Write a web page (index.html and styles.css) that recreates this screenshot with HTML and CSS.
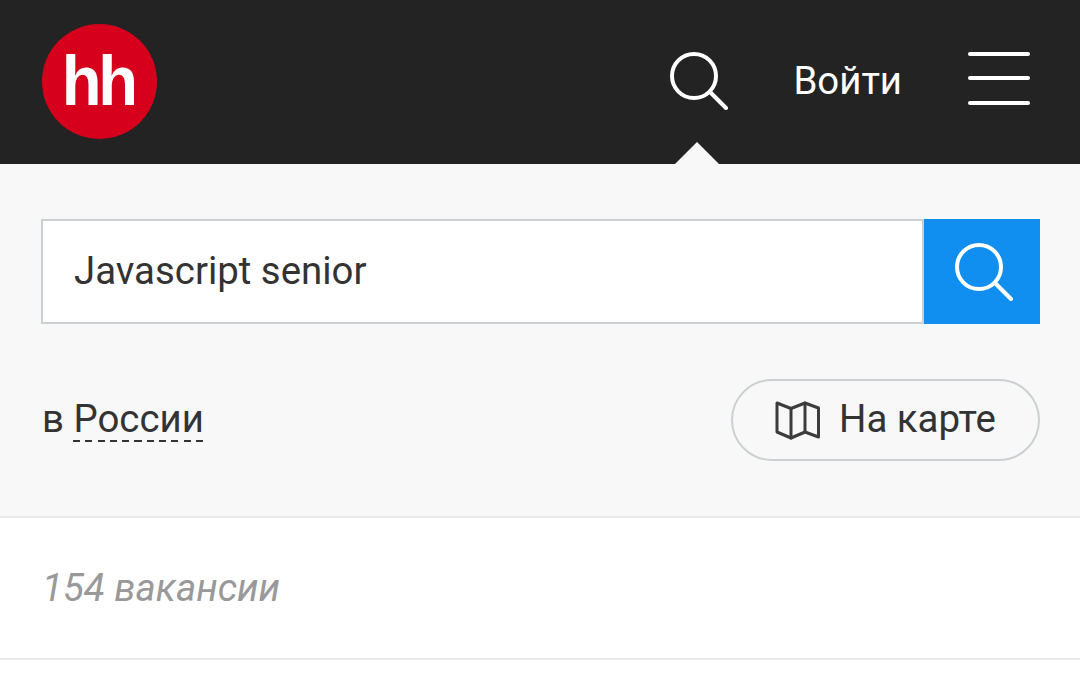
FILE: index.html
```html
<!DOCTYPE html>
<html lang="ru">
<head>
<meta charset="utf-8">
<title>hh</title>
<link rel="stylesheet" href="styles.css">
</head>
<body>
<header class="header">
  <a class="logo"><span class="logo-text">hh</span></a>
  <div class="header-actions">
    <a class="header-search">
      <svg width="58" height="58" viewBox="0 0 58 58" fill="none" stroke="#fff" stroke-width="4" stroke-linecap="round"><circle cx="24" cy="24" r="22"/><path d="M40 40 L56 56"/></svg>
    </a>
    <a class="login">Войти</a>
    <a class="burger"><span></span><span></span><span></span></a>
  </div>
</header>
<section class="panel">
  <form class="search-row">
    <div class="search-input">Javascript senior</div>
    <button class="search-button" type="button">
      <svg width="58" height="58" viewBox="0 0 58 58" fill="none" stroke="#fff" stroke-width="4" stroke-linecap="round"><circle cx="24" cy="24" r="22"/><path d="M40 40 L56 56"/></svg>
    </button>
  </form>
  <div class="region-row">
    <div class="region">в <a class="region-link">России</a></div>
    <a class="map-button">
      <svg class="map-icon" width="46" height="40" viewBox="0 0 46 40" fill="none" stroke="#3c3c3c" stroke-width="3" stroke-linejoin="round" stroke-linecap="round"><path d="M2 2 L16 7.500 L30 2 L43.500 7 V36 L30 31 L16 37 L2 31 Z"/><path d="M16 7.500 V37"/><path d="M30 2 V31"/></svg>
      <span class="map-label">На карте</span>
    </a>
  </div>
</section>
<section class="results">154 вакансии</section>
</body>
</html>
```
FILE: styles.css
```css
* { box-sizing: border-box; }
html, body { margin: 0; padding: 0; }
body {
  width: 1080px;
  height: 684px;
  overflow: hidden;
  background: #fff;
  font-family: Roboto, "Noto Sans", sans-serif;
  font-size: 38.4px;
  color: #333;
}
.header {
  height: 164px;
  background: #232323;
  display: flex;
  align-items: center;
  justify-content: space-between;
  padding: 0 50px 2px 42px;
}
.logo {
  width: 115px;
  height: 115px;
  border-radius: 50%;
  background: #d6001c;
  display: flex;
  align-items: center;
  justify-content: center;
}
.logo-text {
  font-family: "Liberation Sans", sans-serif;
  font-weight: 700;
  font-size: 70px;
  line-height: 1;
  color: #fff;
  letter-spacing: -3.500px;
  transform: scaleX(0.93);
  margin: -1px 3px 0 0;
}
.header-actions {
  display: flex;
  align-items: center;
}
.header-search {
  position: relative;
  display: flex;
  width: 58px;
  height: 58px;
  margin-right: 65px;
}
.header-search::after {
  content: "";
  position: absolute;
  left: 5px;
  top: 90px;
  border-left: 22px solid transparent;
  border-right: 22px solid transparent;
  border-bottom: 22px solid #f8f8f8;
}
.login {
  line-height: 44px;
  color: #fff;
  margin-right: 66px;
}
.burger {
  width: 62px;
  display: flex;
  flex-direction: column;
  gap: 20.500px;
  margin-bottom: 6px;
}
.burger span {
  display: block;
  height: 4px;
  border-radius: 2px;
  background: #fff;
}
.panel {
  height: 354px;
  background: #f8f8f8;
  border-bottom: 2px solid #e8eaea;
  padding: 55px 40px 0 41px;
}
.search-row {
  display: flex;
  height: 105px;
  margin: 0;
}
.search-input {
  flex: 1;
  background: #fff;
  border: 2px solid #ccd0d2;
  padding-left: 31px;
  line-height: 100px;
}
.search-button {
  width: 116px;
  padding: 0 0 0 4px;
  border: 0;
  background: #118ff0;
  display: flex;
  align-items: center;
  justify-content: center;
}
.region-row {
  display: flex;
  align-items: center;
  justify-content: space-between;
  margin-top: 55px;
}
.region {
  line-height: 44px;
  margin-left: 1px;
  margin-bottom: 2px;
}
.region-link {
  padding-bottom: 1px;
  background: repeating-linear-gradient(90deg, #333 0 7px, transparent 7px 12.300px) 0 100% / 100% 2px no-repeat;
}
.map-button {
  width: 309px;
  height: 82px;
  border: 2px solid #ccd0d2;
  border-radius: 41px;
  display: flex;
  align-items: center;
  padding-left: 42px;
  gap: 18px;
}
.map-icon {
  margin-top: 2px;
}
.map-label {
  margin-bottom: 3px;
}
.results {
  height: 142px;
  border-bottom: 2px solid #e8eaea;
  padding: 0 0 2px 42px;
  display: flex;
  align-items: center;
  font-style: italic;
  color: #999;
}
```
